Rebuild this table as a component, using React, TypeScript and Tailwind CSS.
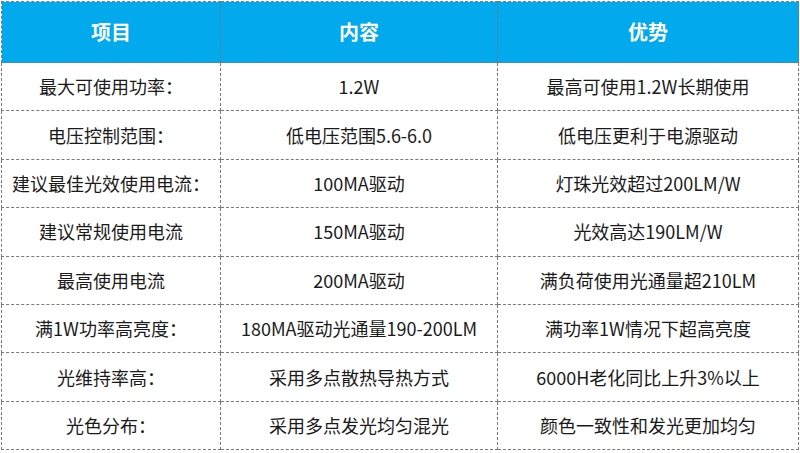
const rows: [string, string, string][] = [
  ['最大可使用功率：', '1.2W', '最高可使用1.2W长期使用'],
  ['电压控制范围：', '低电压范围5.6-6.0', '低电压更利于电源驱动'],
  ['建议最佳光效使用电流：', '100MA驱动', '灯珠光效超过200LM/W'],
  ['建议常规使用电流', '150MA驱动', '光效高达190LM/W'],
  ['最高使用电流', '200MA驱动', '满负荷使用光通量超210LM'],
  ['满1W功率高亮度：', '180MA驱动光通量190-200LM', '满功率1W情况下超高亮度'],
  ['光维持率高：', '采用多点散热导热方式', '6000H老化同比上升3%以上'],
  ['光色分布：', '采用多点发光均匀混光', '颜色一致性和发光更加均匀'],
]

const App = () => {
  return (
    <div className="w-[800px] h-[453px] bg-white pt-px pl-px font-['Noto_Sans_CJK_SC','Noto_Sans',sans-serif]">
      <table className="w-[797px] border-collapse table-fixed text-center">
        <colgroup>
          <col className="w-[219px]" />
          <col className="w-[277px]" />
          <col className="w-[301px]" />
        </colgroup>
        <thead>
          <tr className="h-[61px] bg-[#02a9ec] text-white text-[20px] font-bold">
            <th className="border border-dashed border-[#6b7a85]">项目</th>
            <th className="border border-dashed border-[#6b7a85]">内容</th>
            <th className="border border-dashed border-[#6b7a85]">优势</th>
          </tr>
        </thead>
        <tbody className="text-[18px] text-[#1a1a1a]">
          {rows.map((r, i) => (
            <tr key={i} className="h-[48.4px]">
              <td className="border border-dashed border-[#7a7a7a]">{r[0]}</td>
              <td className="border border-dashed border-[#7a7a7a]">{r[1]}</td>
              <td className="border border-dashed border-[#7a7a7a]">{r[2]}</td>
            </tr>
          ))}
        </tbody>
      </table>
    </div>
  )
}

export default App
